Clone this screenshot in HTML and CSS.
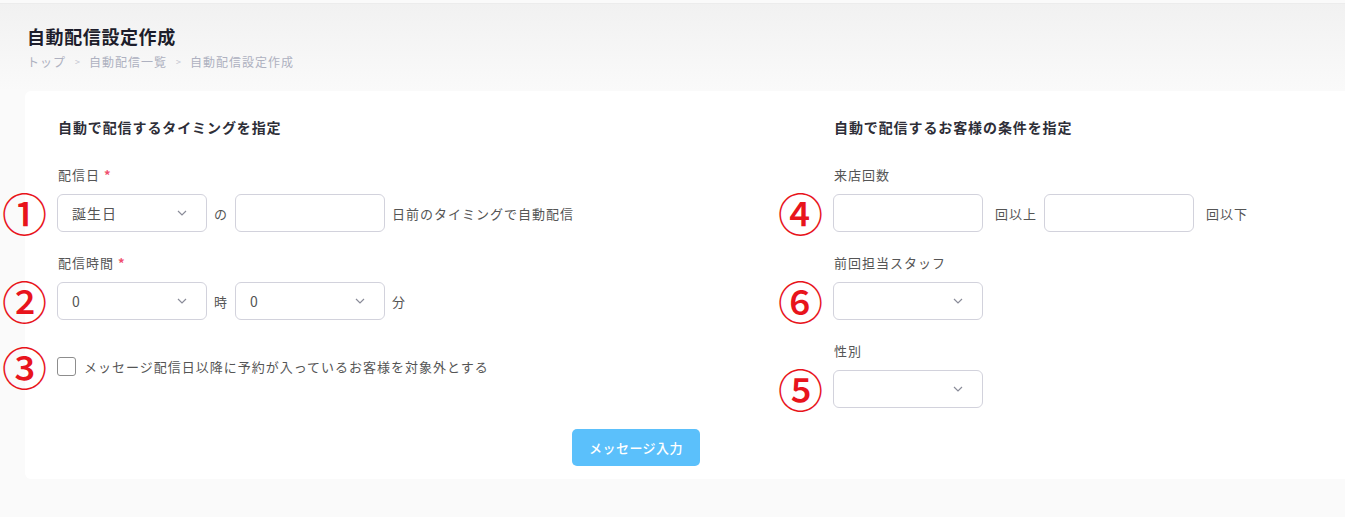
FILE: index.html
```html
<!DOCTYPE html>
<html lang="ja">
<head>
<meta charset="utf-8">
<title>自動配信設定作成</title>
<link rel="stylesheet" href="styles.css">
</head>
<body>
<div class="page">
  <header class="page-header">
    <h1 class="page-title">自動配信設定作成</h1>
    <nav class="breadcrumb">
      <span class="crumb">トップ</span><span class="sep">&gt;</span><span class="crumb">自動配信一覧</span><span class="sep">&gt;</span><span class="crumb">自動配信設定作成</span>
    </nav>
  </header>

  <section class="card">
    <div class="columns">
      <div class="col">
        <h2 class="section-title">自動で配信するタイミングを指定</h2>

        <div class="field">
          <div class="label">配信日 <span class="req">*</span></div>
          <div class="row">
            <span class="mark">①</span>
            <div class="select"><span class="value">誕生日</span><svg class="chev" viewBox="0 0 10 6" width="10" height="6"><path d="M1 1l4 4 4-4" fill="none" stroke="#8a8c99" stroke-width="1.2"/></svg></div>
            <span class="unit">の</span>
            <div class="input"></div>
            <span class="unit">日前のタイミングで自動配信</span>
          </div>
        </div>

        <div class="field">
          <div class="label">配信時間 <span class="req">*</span></div>
          <div class="row">
            <span class="mark">②</span>
            <div class="select"><span class="value">0</span><svg class="chev" viewBox="0 0 10 6" width="10" height="6"><path d="M1 1l4 4 4-4" fill="none" stroke="#8a8c99" stroke-width="1.2"/></svg></div>
            <span class="unit">時</span>
            <div class="select"><span class="value">0</span><svg class="chev" viewBox="0 0 10 6" width="10" height="6"><path d="M1 1l4 4 4-4" fill="none" stroke="#8a8c99" stroke-width="1.2"/></svg></div>
            <span class="unit">分</span>
          </div>
        </div>

        <div class="check-row">
          <span class="mark">③</span>
          <span class="checkbox"></span>
          <span class="check-text">メッセージ配信日以降に予約が入っているお客様を対象外とする</span>
        </div>
      </div>

      <div class="col">
        <h2 class="section-title">自動で配信するお客様の条件を指定</h2>

        <div class="field">
          <div class="label">来店回数</div>
          <div class="row">
            <span class="mark">④</span>
            <div class="input"></div>
            <span class="unit wide">回以上</span>
            <div class="input"></div>
            <span class="unit wide">回以下</span>
          </div>
        </div>

        <div class="field">
          <div class="label">前回担当スタッフ</div>
          <div class="row">
            <span class="mark">⑥</span>
            <div class="select"><span class="value"></span><svg class="chev" viewBox="0 0 10 6" width="10" height="6"><path d="M1 1l4 4 4-4" fill="none" stroke="#8a8c99" stroke-width="1.2"/></svg></div>
          </div>
        </div>

        <div class="field">
          <div class="label">性別</div>
          <div class="row">
            <span class="mark">⑤</span>
            <div class="select"><span class="value"></span><svg class="chev" viewBox="0 0 10 6" width="10" height="6"><path d="M1 1l4 4 4-4" fill="none" stroke="#8a8c99" stroke-width="1.2"/></svg></div>
          </div>
        </div>
      </div>
    </div>

    <div class="actions">
      <button class="btn">メッセージ入力</button>
    </div>
  </section>
</div>
</body>
</html>
```

FILE: styles.css
```css
* { box-sizing: border-box; }

html, body {
  margin: 0;
  padding: 0;
  background: #fafafa;
  overflow: hidden;
}

body {
  font-family: "Noto Sans CJK JP", "Noto Sans", sans-serif;
  color: #555;
}

.page {
  padding-top: 3px;
  background: #fafafa;
  min-height: 517px;
}

.page-header {
  height: 88px;
  padding: 20px 0 0 27px;
  background: linear-gradient(#f1f1f1, #fafafa);
  border-top: 1px solid #ececec;
}

.page-title {
  margin: 0;
  font-size: 18px;
  line-height: 24px;
  font-weight: 700;
  color: #1d1d2b;
  letter-spacing: 0.6px;
}

.breadcrumb {
  margin-top: 5px;
  font-size: 12px;
  line-height: 18px;
  color: #aeb1c0;
  letter-spacing: 1px;
  display: flex;
  align-items: center;
}

.sep {
  font-size: 9px;
  margin: 0 8px 0 9px;
  color: #c2c4cf;
}

.card {
  background: #ffffff;
  margin-left: 25px;
  margin-right: -40px;
  border-radius: 6px;
  padding: 26px 0 13px 32px;
}

.columns {
  display: grid;
  grid-template-columns: 776px 1fr;
}

.section-title {
  margin: 0 0 28px;
  font-size: 14px;
  line-height: 20px;
  font-weight: 700;
  color: #2e2e38;
  letter-spacing: 0.9px;
  padding-left: 1px;
}

.field {
  margin-bottom: 21px;
}

.label {
  font-size: 13px;
  line-height: 20px;
  letter-spacing: 1px;
  color: #555;
  margin-bottom: 9px;
  padding-left: 1px;
}

.req {
  color: #f0506e;
  font-weight: 700;
}

.row {
  position: relative;
  display: flex;
  align-items: center;
  gap: 7px;
  height: 38px;
}

.mark {
  position: absolute;
  left: -55px;
  top: 50%;
  transform: translateY(-52%);
  font-size: 45px;
  line-height: 1;
  font-weight: 500;
  color: #e8141c;
  font-family: "Noto Sans CJK JP", sans-serif;
}

.select, .input {
  width: 150px;
  height: 38px;
  border: 1px solid #d2d2dc;
  border-radius: 6px;
  background: #fff;
}

.select {
  display: flex;
  align-items: center;
  justify-content: space-between;
  padding: 0 19px 0 14px;
}

.value {
  font-size: 14px;
  letter-spacing: 1px;
  color: #555;
}

.chev { display: block; }

.unit {
  font-size: 13px;
  letter-spacing: 1px;
  color: #555;
}

.unit:first-of-type { }

.unit.wide {
  margin-left: 5px;
}

.check-row {
  position: relative;
  display: flex;
  align-items: center;
  gap: 8px;
  margin-top: 37px;
  height: 19px;
}

.checkbox {
  width: 19px;
  height: 19px;
  border: 1px solid #8d8d8d;
  border-radius: 3px;
  background: #fff;
}

.check-text {
  font-size: 13px;
  letter-spacing: 1px;
  color: #555;
}

.actions {
  padding-left: 515px;
}

.btn {
  width: 128px;
  height: 37px;
  border: none;
  border-radius: 5px;
  background: #5bc0fb;
  color: #fff;
  font-family: "Noto Sans CJK JP", sans-serif;
  font-size: 13px;
  font-weight: 500;
  letter-spacing: 0.5px;
}
```
